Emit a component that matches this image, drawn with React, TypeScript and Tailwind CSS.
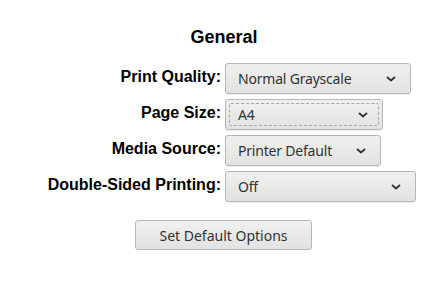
import React from 'react';

const Chevron: React.FC = () => (
  <svg width="10" height="6" viewBox="0 0 10 6" className="shrink-0">
    <path d="M1 1 L5 4.5 L9 1" fill="none" stroke="#2e3436" strokeWidth="1.8" />
  </svg>
);

type Row = { label: string; value: string; width: string; focused?: boolean };

const rows: Row[] = [
  { label: 'Print Quality:', value: 'Normal Grayscale', width: 'w-[186px]' },
  { label: 'Page Size:', value: 'A4', width: 'w-[158px]', focused: true },
  { label: 'Media Source:', value: 'Printer Default', width: 'w-[156px]' },
  { label: 'Double-Sided Printing:', value: 'Off', width: 'w-[191px]' },
];

const App: React.FC = () => {
  return (
    <div className="w-[448px] h-[294px] bg-white overflow-hidden">
      {/* Title */}
      <h2 className="pt-[27px] text-center text-[18px] leading-[21px] font-bold text-black font-['Liberation_Sans',sans-serif]">
        General
      </h2>

      {/* Options */}
      <div className="mt-[15px] grid grid-cols-[221px_auto] gap-x-[4px] gap-y-[5px] items-center">
        {rows.map((r) => (
          <React.Fragment key={r.label}>
            <span className="text-right text-[16px] leading-[18px] font-bold text-black font-['Liberation_Sans',sans-serif] -translate-y-[2px]">
              {r.label}
            </span>
            <div
              className={`${r.width} h-[31px] rounded-[3px] border border-[#b6b6b3] bg-gradient-to-b from-[#f0f0ef] to-[#e2e2e0] shadow-[0_1px_0_rgba(0,0,0,0.06)] p-[3px]`}
            >
              <div
                className={`h-full flex items-center justify-between pl-[8px] pr-[10px] rounded-[2px] border border-dashed ${
                  r.focused ? 'border-[#a8a8a6]' : 'border-transparent'
                }`}
              >
                <span className="text-[14px] tracking-[-0.2px] text-[#2e3436] font-['Noto_Sans',sans-serif]">{r.value}</span>
                <Chevron />
              </div>
            </div>
          </React.Fragment>
        ))}
      </div>

      {/* Action */}
      <div className="mt-[18px] pl-[135px]">
        <button className="w-[177px] h-[30px] rounded-[3px] border border-[#b6b6b3] bg-gradient-to-b from-[#f0f0ef] to-[#e2e2e0] text-[14px] text-[#2e3436] font-['Noto_Sans',sans-serif]">
          Set Default Options
        </button>
      </div>
    </div>
  );
};

export default App;
